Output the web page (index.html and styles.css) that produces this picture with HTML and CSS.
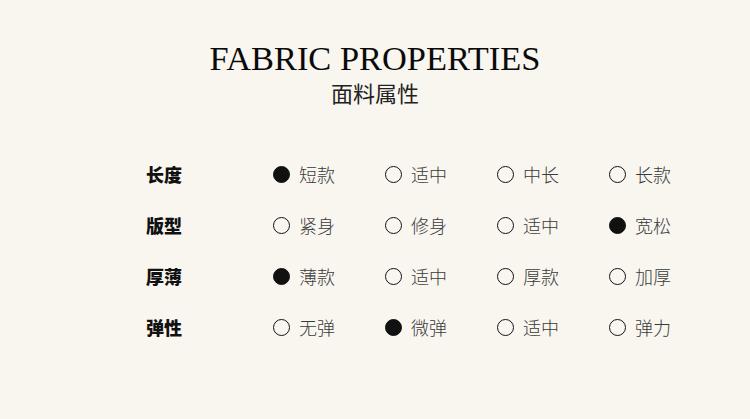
FILE: index.html
```html
<!DOCTYPE html>
<html lang="zh">
<head>
<meta charset="utf-8">
<link rel="stylesheet" href="styles.css">
</head>
<body>
<div class="page">
  <header class="head">
    <h1 class="title">FABRIC PROPERTIES</h1>
    <div class="subtitle">面料属性</div>
  </header>
  <div class="table">
    <div class="row">
      <div class="label">长度</div>
      <div class="opt"><span class="dot on"></span><span class="txt">短款</span></div>
      <div class="opt"><span class="dot"></span><span class="txt">适中</span></div>
      <div class="opt"><span class="dot"></span><span class="txt">中长</span></div>
      <div class="opt"><span class="dot"></span><span class="txt">长款</span></div>
    </div>
    <div class="row">
      <div class="label">版型</div>
      <div class="opt"><span class="dot"></span><span class="txt">紧身</span></div>
      <div class="opt"><span class="dot"></span><span class="txt">修身</span></div>
      <div class="opt"><span class="dot"></span><span class="txt">适中</span></div>
      <div class="opt"><span class="dot on"></span><span class="txt">宽松</span></div>
    </div>
    <div class="row">
      <div class="label">厚薄</div>
      <div class="opt"><span class="dot on"></span><span class="txt">薄款</span></div>
      <div class="opt"><span class="dot"></span><span class="txt">适中</span></div>
      <div class="opt"><span class="dot"></span><span class="txt">厚款</span></div>
      <div class="opt"><span class="dot"></span><span class="txt">加厚</span></div>
    </div>
    <div class="row">
      <div class="label">弹性</div>
      <div class="opt"><span class="dot"></span><span class="txt">无弹</span></div>
      <div class="opt"><span class="dot on"></span><span class="txt">微弹</span></div>
      <div class="opt"><span class="dot"></span><span class="txt">适中</span></div>
      <div class="opt"><span class="dot"></span><span class="txt">弹力</span></div>
    </div>
  </div>
</div>
</body>
</html>
```
FILE: styles.css
```css
html, body {
  margin: 0;
  padding: 0;
  background: #f9f6f0;
}
.page {
  width: 750px;
  height: 419px;
  box-sizing: border-box;
  padding-top: 38px;
  font-family: "Noto Sans CJK SC", "Noto Sans", sans-serif;
  color: #111;
}
.head {
  display: flex;
  flex-direction: column;
  align-items: center;
}
.title {
  margin: 0;
  font-family: "Liberation Serif", serif;
  font-weight: normal;
  font-size: 34.4px;
  line-height: 40px;
  color: #0a0a0a;
}
.subtitle {
  margin-top: -1px;
  font-size: 22px;
  line-height: 30px;
  color: #222;
}
.table {
  margin-top: 52px;
  padding-left: 146px;
  display: flex;
  flex-direction: column;
  gap: 21px;
}
.row {
  display: grid;
  grid-template-columns: 127px repeat(4, 112px);
  align-items: center;
  height: 30px;
}
.label {
  font-size: 18px;
  font-weight: 900;
  color: #111;
}
.opt {
  display: flex;
  align-items: center;
  gap: 9px;
}
.dot {
  width: 17px;
  height: 17px;
  box-sizing: border-box;
  border: 1.5px solid #111;
  border-radius: 50%;
}
.dot.on {
  background: #111;
}
.txt {
  font-size: 18px;
  font-weight: 300;
  color: #3a3a3a;
}
```
